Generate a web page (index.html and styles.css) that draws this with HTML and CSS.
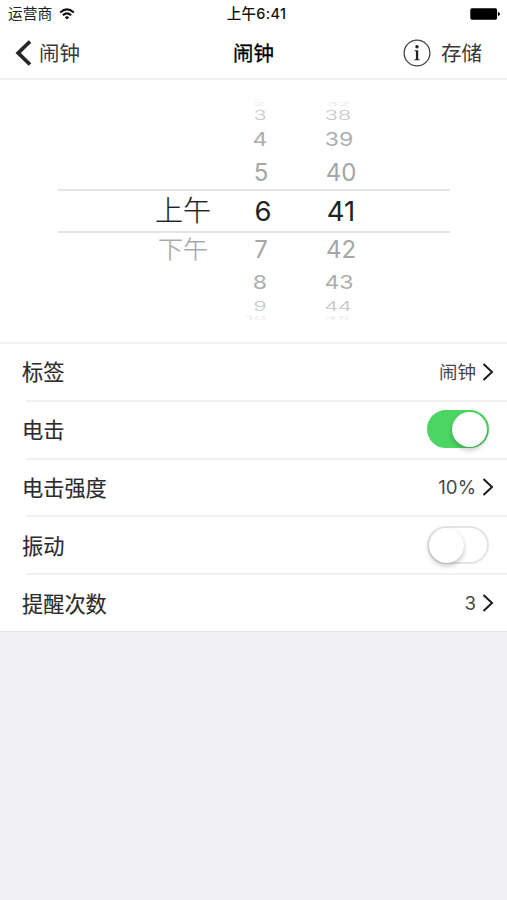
FILE: index.html
```
<!DOCTYPE html>
<html lang="zh-CN">
<head>
<meta charset="utf-8">
<title>闹钟</title>
<link rel="stylesheet" href="styles.css">
</head>
<body>
<header>
  <div class="status">
    <div class="carrier"><span>运营商</span>
      <svg width="16" height="12" viewBox="0 0 16 12"><g fill="none" stroke="#111" stroke-width="2"><path d="M1.2 4.400Q8-1.600 14.800 4.400"/><path d="M3.800 7.200Q8 3.600 12.200 7.200"/></g><path fill="#111" d="M5.800 9.200Q8 7.400 10.200 9.200L8 11.400Z"/></svg>
    </div>
    <div class="clock">上午6:41</div>
    <svg class="battery" width="30" height="12" viewBox="0 0 30 12"><rect x=".3" y=".3" width="26.8" height="11.4" rx="1.6" fill="#000"/><path d="M28 4Q30 4.300 30 6T28 8Z" fill="#000"/></svg>
  </div>
  <nav class="nav">
    <div class="back"><svg width="18" height="26" viewBox="0 0 18 26"><path d="M16 1.500 4.200 13 16 24.500" fill="none" stroke="#262626" stroke-width="3.800"/></svg><span>闹钟</span></div>
    <h1>闹钟</h1>
    <div class="actions"><svg width="28" height="28" viewBox="0 0 28 28"><circle cx="14" cy="14" r="12.900" fill="none" stroke="#444" stroke-width="1.300"/><circle cx="14" cy="7.800" r="1.700" fill="#222"/><path d="M11.500 11.300H15.200V20.300H16.600V21.200H11.500V20.300H12.900V12.200H11.500Z" fill="#222"/></svg><span>存储</span></div>
  </nav>
</header>
<section class="picker">
  <div class="wheel">
    <div class="row edge"><span></span><span class="digit">2</span><span class="digit">37</span></div>
    <div class="row far"><span></span><span class="digit">3</span><span class="digit">38</span></div>
    <div class="row mid"><span></span><span class="digit">4</span><span class="digit">39</span></div>
    <div class="row near"><span></span><span class="digit">5</span><span class="digit">40</span></div>
    <div class="row current"><span class="period">上午</span><span class="digit">6</span><span class="digit">41</span></div>
    <div class="row near below"><span class="period">下午</span><span class="digit">7</span><span class="digit">42</span></div>
    <div class="row mid below"><span></span><span class="digit">8</span><span class="digit">43</span></div>
    <div class="row far below"><span></span><span class="digit">9</span><span class="digit">44</span></div>
    <div class="row edge bottom"><span></span><span class="digit">10</span><span class="digit">45</span></div>
  </div>
</section>
<main>
  <div class="item"><label>标签</label><span class="value cjk">闹钟</span><svg class="arrow" width="12" height="18" viewBox="0 0 12 18"><path d="M1.500 1 10 9 1.500 17"/></svg></div>
  <div class="item"><label>电击</label><div class="switch on"><i></i></div></div>
  <div class="item"><label>电击强度</label><span class="value">10%</span><svg class="arrow" width="12" height="18" viewBox="0 0 12 18"><path d="M1.500 1 10 9 1.500 17"/></svg></div>
  <div class="item"><label>振动</label><div class="switch"><i></i></div></div>
  <div class="item"><label>提醒次数</label><span class="value">3</span><svg class="arrow" width="12" height="18" viewBox="0 0 12 18"><path d="M1.500 1 10 9 1.500 17"/></svg></div>
</main>
</body>
</html>
```
FILE: styles.css
```
* { box-sizing: border-box; }
body {
  margin: 0;
  min-height: 900px;
  background: #efeff4;
  color: #2b2b2b;
  font-family: Inter, "Noto Sans CJK SC", sans-serif;
}
svg { display: block; flex: none; }
header { height: 80px; background: #fff; border-bottom: 2px solid #f0f0f0; }
.status {
  display: grid;
  grid-template-columns: 1fr auto 1fr;
  align-items: center;
  height: 27px;
  padding: 0 7px 0 8px;
  color: #111;
  font-size: 14.7px;
  line-height: 27px;
}
.carrier { display: flex; align-items: center; gap: 7px; }
.carrier span { padding-top: 1px; line-height: 26px; color: #222; }
.clock { font-size: 14.500px; font-weight: 500; letter-spacing: .3px; padding-left: 5px; }
.battery { justify-self: end; }
.nav {
  display: grid;
  grid-template-columns: 1fr auto 1fr;
  align-items: center;
  height: 51px;
  padding: 0 25px 0 14px;
  font-size: 20.5px;
  line-height: 50px;
}
.back { display: flex; align-items: center; gap: 7px; }
.back span, .actions span { color: #383838; }
.nav h1 { margin: 0; padding-left: 11px; font-size: 20.5px; font-weight: 400; color: #000; -webkit-text-stroke: .3px #000; }
.actions { display: flex; align-items: center; justify-content: flex-end; gap: 10px; }
.back span, .actions span, .nav h1 { position: relative; top: 1px; }
.picker { height: 262px; padding: 21px 57px 0 58px; background: #fff; }
.wheel { display: flex; flex-direction: column; }
.row {
  display: grid;
  grid-template-columns: 90px 68px 90px;
  align-items: center;
  padding-left: 80px;
  color: #a6a6a6;
  font-size: 24px;
  line-height: 30px;
  text-align: center;
}
.row .digit { display: block; }
.period { white-space: nowrap; }
.current { height: 44px; border: solid #e4e4e4; border-width: 2px 0; color: #222; font-size: 27.500px; }
.current .digit { transform: translate(1px, 0); }
.current .digit:last-child { transform: none; }
.current .period { font-size: 28px; font-weight: 300; -webkit-text-stroke: .2px #222; }
.near { height: 34px; }
.near .period { font-size: 25px; font-weight: 300; -webkit-text-stroke: .2px #a6a6a6; transform: translateY(-1px) scaleY(.95); }
.near .digit { transform: translate(-1px, 1px); }
.near .digit:last-child { transform: translate(0, 1px); }
.near.below .digit { transform: translate(-1px, 0); }
.near.below .digit:last-child { transform: none; }
.mid { height: 31px; color: #adadad; }
.mid .digit { transform: translate(-2px, 0) scale(.96, .76); }
.far { height: 18px; color: #c4c4c4; font-weight: 300; }
.far .digit { transform: translate(-2px, 1px) scale(.9, .52); line-height: 18px; }
.far .digit:last-child { transform: translate(-3px, 1px) scale(.9, .52); }
.far.below .digit { transform: translate(-2px, -.5px) scale(.9, .52); }
.far.below .digit:last-child { transform: translate(-3px, -.5px) scale(.9, .52); }
.edge { height: 5px; overflow: hidden; color: #ededed; }
.edge .digit { transform: translate(-3px, 1px) scale(.85, .2); line-height: 5px; }
.bottom .digit:nth-child(2) { transform: translateX(-6px) scale(.85, .2); }
.bottom .digit:last-child { transform: translateX(-4px) scale(.85, .2); }
main { background: #fff; border-top: 2px solid #f2f2f2; border-bottom: 1px solid #e3e3e6; }
.item { display: flex; align-items: center; height: 57.75px; padding: 0 13px 2px 22px; background: linear-gradient(#f0f0f0, #f0f0f0) 26px 100% / 100% 2px no-repeat; }
.item:last-child { height: 56px; padding-bottom: 0; background: none; }
.item label { margin: 0 auto 2px 0; font-size: 21.200px; -webkit-text-stroke: .15px #2b2b2b; }
.value { margin-right: 6px; color: #484848; font-size: 18.700px; }
.value.cjk { margin-bottom: 2px; font-size: 18.500px; }
.arrow path { fill: none; stroke: #1c1c1c; stroke-width: 2; }
.switch { width: 62px; height: 38px; margin: -1px 5px 0 0; padding: 1px; border: 2px solid #e5e5e5; border-radius: 19px; }
.switch i { display: block; width: 35px; height: 35px; margin: -1px 0 0 -1px; border-radius: 50%; background: #fff; box-shadow: 0 3px 5px rgba(0, 0, 0, .22), 0 0 1px rgba(0, 0, 0, .1); }
.switch.on { background: #4bd663; border-color: #4bd663; }
.switch.on i { margin-left: 22px; }
```
